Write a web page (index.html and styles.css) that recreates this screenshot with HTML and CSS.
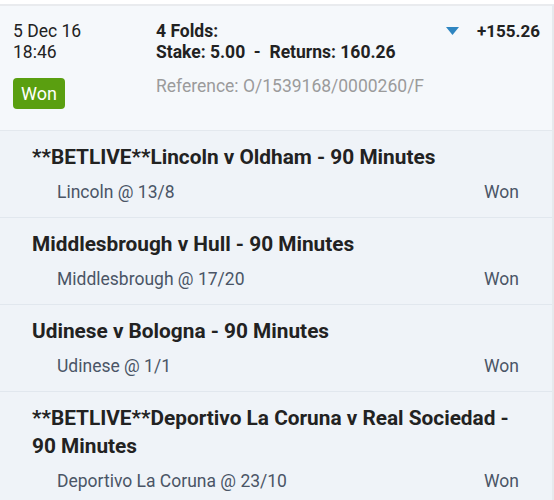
FILE: index.html
```html
<!DOCTYPE html>
<html>
<head>
<meta charset="utf-8">
<link rel="stylesheet" href="styles.css">
</head>
<body>
<div class="wrap">
  <div class="bet">
    <div class="bet-date">
      <div>5 Dec 16</div>
      <div>18:46</div>
      <span class="badge">Won</span>
    </div>
    <div class="bet-info">
      <div class="strong">4 Folds:</div>
      <div class="strong">Stake: 5.00 &nbsp;-&nbsp; Returns: 160.26</div>
      <div class="ref">Reference: O/1539168/0000260/F</div>
    </div>
    <div class="bet-toggle"><svg width="13" height="8" viewBox="0 0 13 8"><polygon points="0,0 13,0 6.5,8" fill="#2f86c1"/></svg></div>
    <div class="bet-profit">+155.26</div>
  </div>
  <div class="sel">
    <div class="sel-title">**BETLIVE**Lincoln v Oldham - 90 Minutes</div>
    <div class="sel-row"><span>Lincoln @ 13/8</span><span>Won</span></div>
  </div>
  <div class="sel">
    <div class="sel-title">Middlesbrough v Hull - 90 Minutes</div>
    <div class="sel-row"><span>Middlesbrough @ 17/20</span><span>Won</span></div>
  </div>
  <div class="sel">
    <div class="sel-title">Udinese v Bologna - 90 Minutes</div>
    <div class="sel-row"><span>Udinese @ 1/1</span><span>Won</span></div>
  </div>
  <div class="sel">
    <div class="sel-title">**BETLIVE**Deportivo La Coruna v Real Sociedad - 90 Minutes</div>
    <div class="sel-row"><span>Deportivo La Coruna @ 23/10</span><span>Won</span></div>
  </div>
</div>
</body>
</html>
```
FILE: styles.css
```css
* { box-sizing: border-box; }
html, body { margin: 0; padding: 0; background: #fff; }
body {
  font-family: Roboto, "Liberation Sans", sans-serif;
  color: #222;
  padding-top: 4px;
  overflow: hidden;
}
.wrap {
  border-top: 2px solid #e9ebee;
  border-right: 2px solid #e6e9ed;
  background: #eff3f8;
  min-height: 500px;
}
.bet {
  background: #f5f8fb;
  display: flex;
  align-items: flex-start;
  padding: 15px 12px 21px 13px;
  border-bottom: 1px solid #e3e8ee;
  font-size: 17.5px;
  line-height: 21px;
}
.bet-date { width: 143px; }
.badge {
  display: inline-block;
  margin-top: 15px;
  background: #5a9f10;
  color: #fff;
  border-radius: 4px;
  padding: 0 8px;
  height: 31px;
  line-height: 31px;
  font-size: 18px;
}
.bet-info { flex: 1; }
.strong { font-weight: bold; }
.ref { color: #9b9b9b; margin-top: 13px; }
.bet-toggle { padding-top: 6px; margin-right: 18px; line-height: 0; }
.bet-profit { font-weight: bold; font-size: 17px; }
.sel {
  padding: 12px 33px 13px 32px;
  border-bottom: 1px solid #e1e7ee;
}
.sel-title {
  font-weight: bold;
  font-size: 20.8px;
  line-height: 28px;
  color: #222;
}
.sel-row {
  display: flex;
  justify-content: space-between;
  margin-top: 9px;
  padding-left: 25px;
  font-size: 17.5px;
  line-height: 24px;
  color: #4a5566;
}
```
